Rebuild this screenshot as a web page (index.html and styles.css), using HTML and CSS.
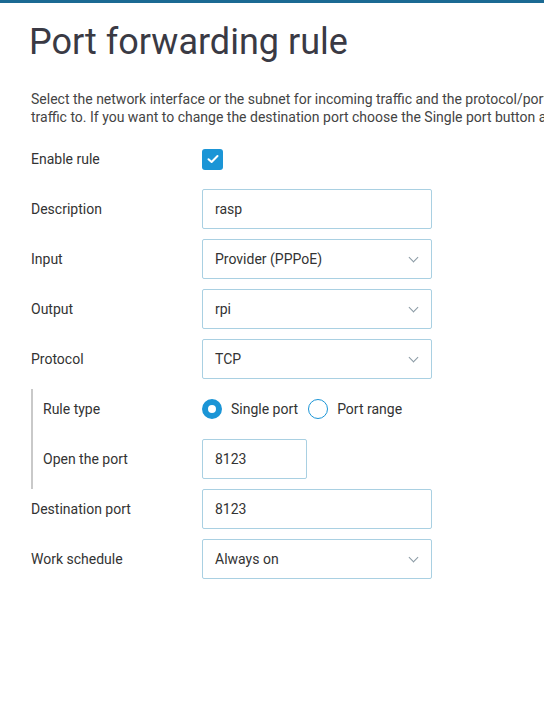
FILE: index.html
```html
<!DOCTYPE html>
<html>
<head>
    <title>Port forwarding rule</title>
    <link rel="stylesheet" href="styles.css">
</head>
<body>
    <div class="topbar"></div>
    <div class="page">
        <h1>Port forwarding rule</h1>
        <p class="intro">Select the network interface or the subnet for incoming traffic and the protocol/port numbers, then choose the device on your local network to forward this<br>traffic to. If you want to change the destination port choose the Single port button and enter the port numbers in the fields below.</p>

        <form class="rule-form">
            <div class="row">
                <label class="label">Enable rule</label>
                <div class="control">
                    <span class="checkbox">
                        <svg width="12" height="10" viewBox="0 0 12 10"><path d="M1.5 5.2 L4.6 8 L10.5 2" fill="none" stroke="#fff" stroke-width="2" stroke-linecap="round" stroke-linejoin="round"/></svg>
                    </span>
                </div>
            </div>
            <div class="row">
                <label class="label">Description</label>
                <div class="control"><div class="field">rasp</div></div>
            </div>
            <div class="row">
                <label class="label">Input</label>
                <div class="control"><div class="field select">Provider (PPPoE)</div></div>
            </div>
            <div class="row">
                <label class="label">Output</label>
                <div class="control"><div class="field select">rpi</div></div>
            </div>
            <div class="row">
                <label class="label">Protocol</label>
                <div class="control"><div class="field select">TCP</div></div>
            </div>

            <!-- port settings -->
            <div class="group">
                <div class="row">
                    <label class="label">Rule type</label>
                    <div class="control radios">
                        <span class="radio checked"></span><span class="radio-text">Single port</span>
                        <span class="radio"></span><span class="radio-text">Port range</span>
                    </div>
                </div>
                <div class="row">
                    <label class="label">Open the port</label>
                    <div class="control"><div class="field short">8123</div></div>
                </div>
            </div>

            <div class="row">
                <label class="label">Destination port</label>
                <div class="control"><div class="field">8123</div></div>
            </div>
            <div class="row">
                <label class="label">Work schedule</label>
                <div class="control"><div class="field select">Always on</div></div>
            </div>
        </form>
    </div>
</body>
</html>
```

FILE: styles.css
```css
/* page */
body {
    margin: 0;
    font-family: Roboto, "Liberation Sans", sans-serif;
    color: #333;
    background: #fff;
    overflow-x: hidden;
}

.topbar {
    height: 3px;
    background-color: #1b6a93;
}

.page {
    padding: 0 0 0 31px;
}

/* title */
h1 {
    margin: 18px 0 0 -2px;
    font-size: 36px;
    font-weight: 400;
    line-height: 42px;
    color: #3a3a44;
}

.intro {
    width: 900px;
    margin: 27px 0 0 0;
    font-size: 14px;
    line-height: 18px;
    color: #444;
    white-space: nowrap;
}

/* form */
.rule-form {
    margin-top: 13px;
    display: flex;
    flex-direction: column;
}

.row {
    display: flex;
    align-items: center;
    height: 40px;
    margin-bottom: 10px;
}

.label {
    width: 171px;
    font-size: 14px;
    color: #333;
}

.control {
    width: 230px;
    display: flex;
    align-items: center;
}

.field {
    box-sizing: border-box;
    width: 100%;
    height: 40px;
    padding: 0 12px;
    border: 1px solid #a9d0e2;
    border-radius: 2px;
    font-size: 14px;
    line-height: 38px;
    color: #333;
}

.field.short {
    width: 105px;
}

.select {
    position: relative;
}

.select::after {
    content: "";
    position: absolute;
    right: 14px;
    top: 14px;
    width: 6px;
    height: 6px;
    border-right: 1px solid #8a9aa4;
    border-bottom: 1px solid #8a9aa4;
    transform: rotate(45deg);
}

/* checkbox */
.checkbox {
    width: 21px;
    height: 21px;
    border-radius: 3px;
    background-color: #1b95d6;
    display: flex;
    align-items: center;
    justify-content: center;
}

/* nested group */
.group {
    display: flex;
    flex-direction: column;
    border-left: 2px solid #c9c9c9;
    padding-left: 10px;
}

.group .label {
    width: 159px;
}

/* radio buttons */
.radio {
    box-sizing: border-box;
    width: 20px;
    height: 20px;
    border-radius: 50%;
    border: 1.5px solid #1b95d6;
    margin-right: 9px;
}

.radio.checked {
    border: 6px solid #1b95d6;
}

.radio-text {
    font-size: 14px;
    margin-right: 10px;
}
```
